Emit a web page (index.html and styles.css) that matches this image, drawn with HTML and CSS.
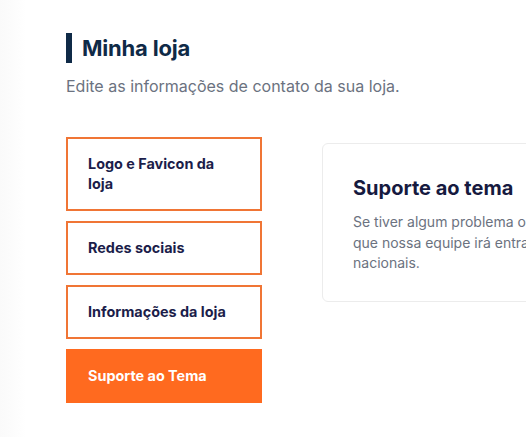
FILE: index.html
```html
<!DOCTYPE html>
<html lang="pt-BR">
<head>
<meta charset="utf-8">
<title>Minha loja</title>
<link rel="stylesheet" href="styles.css">
</head>
<body>
<div class="edge"></div>
<main class="page">
  <header class="page-head">
    <h1 class="page-title">Minha loja</h1>
    <p class="page-sub">Edite as informações de contato da sua loja.</p>
  </header>
  <div class="content">
    <nav class="tabs">
      <a class="tab">Logo e Favicon da loja</a>
      <a class="tab">Redes sociais</a>
      <a class="tab">Informações da loja</a>
      <a class="tab active">Suporte ao Tema</a>
    </nav>
    <section class="card">
      <h2 class="card-title">Suporte ao tema</h2>
      <p class="card-text">Se tiver algum problema ou dúvida com o tema, entre em contato conosco<br>que nossa equipe irá entrar em contato em até 2 dias úteis<br>nacionais.</p>
    </section>
  </div>
</main>
</body>
</html>
```
FILE: styles.css
```css
html, body {
  margin: 0;
  padding: 0;
  background: #ffffff;
  overflow: hidden;
  width: 526px;
  height: 437px;
}
body {
  font-family: Inter, "Noto Sans", sans-serif;
  position: relative;
}
.edge {
  position: absolute;
  left: 0;
  top: 0;
  bottom: 0;
  width: 26px;
  background: linear-gradient(to right, #fafafa, #fcfcfc 45%, #ffffff);
}
.page {
  position: relative;
  padding: 33px 0 0 66px;
}
.page-title {
  margin: 0;
  border-left: 6px solid #0f2a47;
  padding-left: 10px;
  height: 30px;
  line-height: 30px;
  font-size: 22px;
  font-weight: 700;
  color: #0f2a47;
  letter-spacing: -0.2px;
}
.page-sub {
  margin: 12px 0 0;
  font-size: 16px;
  line-height: 22px;
  color: #6b7280;
}
.content {
  display: flex;
  align-items: flex-start;
  gap: 60px;
  margin-top: 40px;
}
.tabs {
  display: flex;
  flex-direction: column;
  gap: 10px;
  width: 196px;
  flex: none;
}
.tab {
  display: block;
  box-sizing: border-box;
  border: 2px solid #f07535;
  padding: 15px 30px 15px 20px;
  font-size: 14.4px;
  line-height: 20px;
  font-weight: 700;
  color: #1b1d4a;
}
.tab.active {
  background: #ff6a1f;
  border-color: #ff6a1f;
  color: #ffffff;
}
.card {
  margin-top: 6px;
  flex: none;
  width: 520px;
  height: 159px;
  box-sizing: border-box;
  border: 1px solid #ececec;
  border-radius: 6px;
  padding: 31px 30px;
}
.card-title {
  margin: 0;
  font-size: 20px;
  line-height: 26px;
  font-weight: 700;
  color: #161a3f;
}
.card-text {
  margin: 11px 0 0;
  font-size: 14px;
  line-height: 20.5px;
  color: #6b7280;
  white-space: nowrap;
}
```
